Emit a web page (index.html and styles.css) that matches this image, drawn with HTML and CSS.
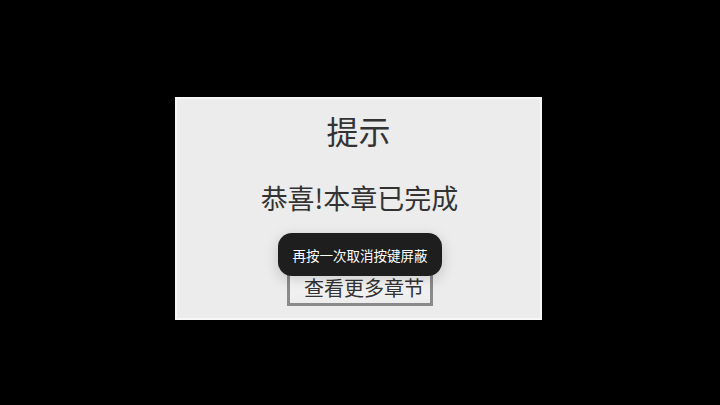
FILE: index.html
```html
<!DOCTYPE html>
<html lang="zh">
<head>
<meta charset="utf-8">
<link rel="stylesheet" href="styles.css">
</head>
<body>
<div class="screen">
  <div class="dialog">
    <div class="title">提示</div>
    <div class="message">恭喜!本章已完成</div>
    <div class="button">查看更多章节</div>
  </div>
</div>
<div class="toast">再按一次取消按键屏蔽</div>
</body>
</html>
```
FILE: styles.css
```css
html, body {
  margin: 0;
  padding: 0;
  background: #000;
  width: 720px;
  height: 405px;
  overflow: hidden;
  font-family: "Noto Sans CJK SC", "Noto Sans", sans-serif;
}
.screen {
  padding: 97px 0 0 175px;
}
.dialog {
  box-sizing: border-box;
  width: 367px;
  height: 223px;
  border: 2px solid #f7f7f7;
  background: #ececec;
  display: flex;
  flex-direction: column;
  align-items: center;
  padding-top: 11px;
}
.title {
  font-size: 32px;
  line-height: 40px;
  color: #333;
}
.message {
  margin-top: 30px;
  font-size: 27px;
  line-height: 36px;
  color: #333;
  padding-left: 2px;
}
.button {
  box-sizing: border-box;
  margin-top: 53px;
  height: 37px;
  width: 146px;
  border: 3px solid #8a8a8a;
  background: linear-gradient(#fbfbfb, #ececec);
  display: flex;
  align-items: center;
  justify-content: center;
  font-size: 20px;
  color: #333;
  padding-left: 9px;
  margin-left: 2px;
}
.toast {
  position: absolute;
  left: 278px;
  top: 233px;
  width: 164px;
  height: 43px;
  box-sizing: border-box;
  border-radius: 14px;
  background: #1e1e1e;
  color: #fff;
  font-size: 13.5px;
  display: flex;
  align-items: center;
  justify-content: center;
  box-shadow: 0 4px 14px rgba(0,0,0,0.18);
}
```
